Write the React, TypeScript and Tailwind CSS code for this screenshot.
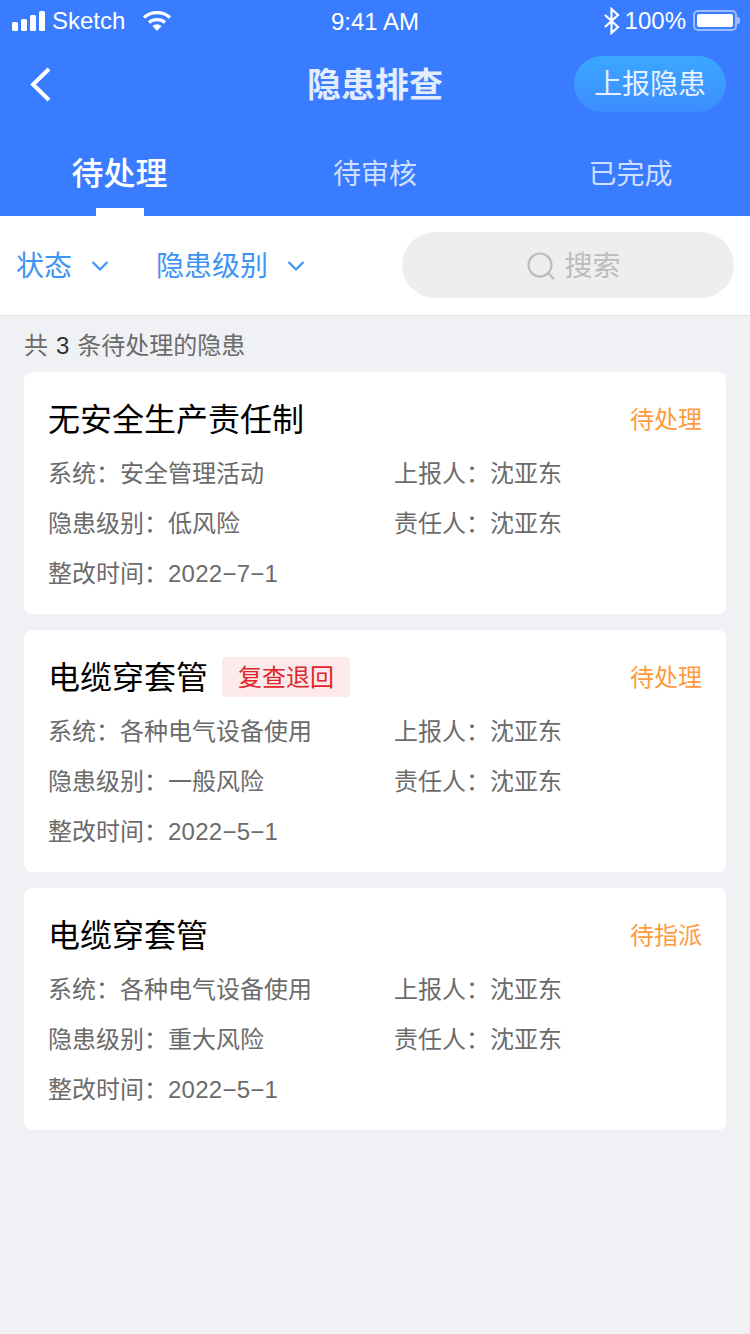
import React from "react";

const font = { fontFamily: '"Liberation Sans","Noto Sans CJK SC",sans-serif' };

function StatusBar() {
  return (
    <div className="h-10 flex items-center relative text-white text-[24px] leading-none pt-[1px]">
      <div className="flex items-center pl-3 w-[300px]">
        <svg width="34" height="20" viewBox="0 0 34 20" className="mr-[6px]" fill="#fff">
          <rect x="0" y="11" width="6" height="9" rx="1.5" />
          <rect x="9" y="8" width="6" height="12" rx="1.5" />
          <rect x="18" y="4" width="6" height="16" rx="1.5" />
          <rect x="27" y="0" width="6" height="20" rx="1.5" />
        </svg>
        <span>Sketch</span>
        <svg width="30" height="22" viewBox="0 0 30 22" className="ml-[17px]" fill="none" stroke="#fff" strokeWidth="3.2">
          <path d="M2 7.5C9.5 1 20.5 1 28 7.5" />
          <path d="M7 12.5C11.5 8.7 18.5 8.7 23 12.5" />
          <path d="M15 21l-4.6-5a7 7 0 0 1 9.2 0z" fill="#fff" stroke="none" />
        </svg>
      </div>
      <div className="absolute left-0 right-0 top-[10px] text-center">9:41 AM</div>
      <div className="ml-auto flex items-center pr-[10px]">
        <svg width="18" height="28" viewBox="0 0 18 28" fill="none" stroke="#fff" strokeWidth="2.2" className="mr-[4px]">
          <path d="M2 8l13 12-6.5 6V2L15 8 2 20" />
        </svg>
        <span>100%</span>
        <div className="ml-[7px] w-[44px] h-[21px] rounded-[5px] border-2 border-[#9dbcff] p-[2px]">
          <div className="w-full h-full bg-white rounded-[2px]" />
        </div>
        <div className="w-[3px] h-[7px] bg-[#9dbcff] rounded-r-[2px]" />
      </div>
    </div>
  );
}

function Header() {
  return (
    <div className="h-[88px] flex items-center relative">
      <svg width="24" height="36" viewBox="0 0 24 36" fill="none" stroke="#fff" strokeWidth="4" className="ml-[29px] mt-[2px]">
        <path d="M20 2L4 17.5 20 33" />
      </svg>
      <div className="absolute left-0 right-0 top-[21px] text-center text-[34px] leading-[48px] font-bold text-[#e3edff]">隐患排查</div>
      <div className="ml-auto mr-6 w-[152px] h-14 pt-[2px] rounded-full bg-gradient-to-b from-[#3aa7ff] to-[#3e8dff] text-[#e8f1ff] text-[28px] flex items-center justify-center">上报隐患</div>
    </div>
  );
}

function Tabs() {
  return (
    <div className="h-[88px] flex relative">
      <div className="w-[239px] flex flex-col items-center text-white text-[32px] font-medium pt-[23px] leading-[46px]">
        待处理
      </div>
      <div className="w-[272px] flex justify-center text-[#cfdfff] text-[28px] pt-[25px] leading-[44px]">待审核</div>
      <div className="w-[239px] flex justify-center text-[#cfdfff] text-[28px] pt-[25px] leading-[44px]">已完成</div>
      <div className="absolute left-[96px] bottom-0 w-12 h-2 bg-white" />
    </div>
  );
}

function Chevron() {
  return (
    <svg width="18" height="12" viewBox="0 0 18 12" fill="none" stroke="#3d94f5" strokeWidth="2.2">
      <path d="M1.5 2l7.5 7.5L16.5 2" />
    </svg>
  );
}

function Filters() {
  return (
    <div className="h-[100px] bg-white border-b border-[#e2e3e6] flex items-center text-[#3d94f5] text-[28px]">
      <span className="ml-[16px] mt-[2px]">状态</span>
      <span className="ml-[19px]"><Chevron /></span>
      <span className="ml-[47px] mt-[2px]">隐患级别</span>
      <span className="ml-[19px]"><Chevron /></span>
      <div className="ml-auto mr-4 w-[332px] h-[66px] -mt-[2px] rounded-full bg-[#edeef0] flex items-center justify-center text-[#bcbcbc] pl-[12px]">
        <svg width="28" height="28" viewBox="0 0 28 28" fill="none" stroke="#bcbcbc" strokeWidth="2.2" className="mr-[9px] mt-[2px]">
          <circle cx="13" cy="13" r="11.5" />
          <path d="M21 21l6 6" />
        </svg>
        <span className="mt-[4px]">搜索</span>
      </div>
    </div>
  );
}

type CardData = { title: string; badge?: string; status: string; system: string; level: string; date: string };

function Card({ d }: { d: CardData }) {
  return (
    <div className="bg-white rounded-[8px] h-[242px] px-6 pt-[21px]">
      <div className="flex items-center h-[52px]">
        <span className="text-[32px] text-black mt-[2px]">{d.title}</span>
        {d.badge && (
          <span className="ml-[14px] w-[128px] h-10 pt-[2px] rounded-[4px] bg-[#fdeaea] text-[#e0262b] text-[24px] flex items-center justify-center">{d.badge}</span>
        )}
        <span className="ml-auto text-[24px] mt-[2px] text-[#ff9a3d]">{d.status}</span>
      </div>
      <div className="grid grid-cols-[346px_1fr] text-[24px] leading-[50px] text-[#6b6b6b] pt-[4px]">
        <span>系统：{d.system}</span>
        <span>上报人：沈亚东</span>
        <span>隐患级别：{d.level}</span>
        <span>责任人：沈亚东</span>
        <span>整改时间：<span className="tracking-[0.25px]">{d.date}</span></span>
      </div>
    </div>
  );
}

const cards: CardData[] = [
  { title: "无安全生产责任制", status: "待处理", system: "安全管理活动", level: "低风险", date: "2022−7−1" },
  { title: "电缆穿套管", badge: "复查退回", status: "待处理", system: "各种电气设备使用", level: "一般风险", date: "2022−5−1" },
  { title: "电缆穿套管", status: "待指派", system: "各种电气设备使用", level: "重大风险", date: "2022−5−1" },
];

export default function App() {
  return (
    <div className="w-[750px] h-[1334px] bg-[#f0f1f5] overflow-hidden" style={font}>
      <div className="bg-[#397cff]">
        <StatusBar />
        <Header />
        <Tabs />
      </div>
      <Filters />
      <div className="h-[56px] flex items-center pl-6 pt-[3px] text-[24px] text-[#6b6b6b]">
        共<span className="text-[#333333] mx-2 font-medium">3</span>条待处理的隐患
      </div>
      <div className="flex flex-col gap-4 px-6">
        {cards.map((c, i) => (
          <Card key={i} d={c} />
        ))}
      </div>
    </div>
  );
}
